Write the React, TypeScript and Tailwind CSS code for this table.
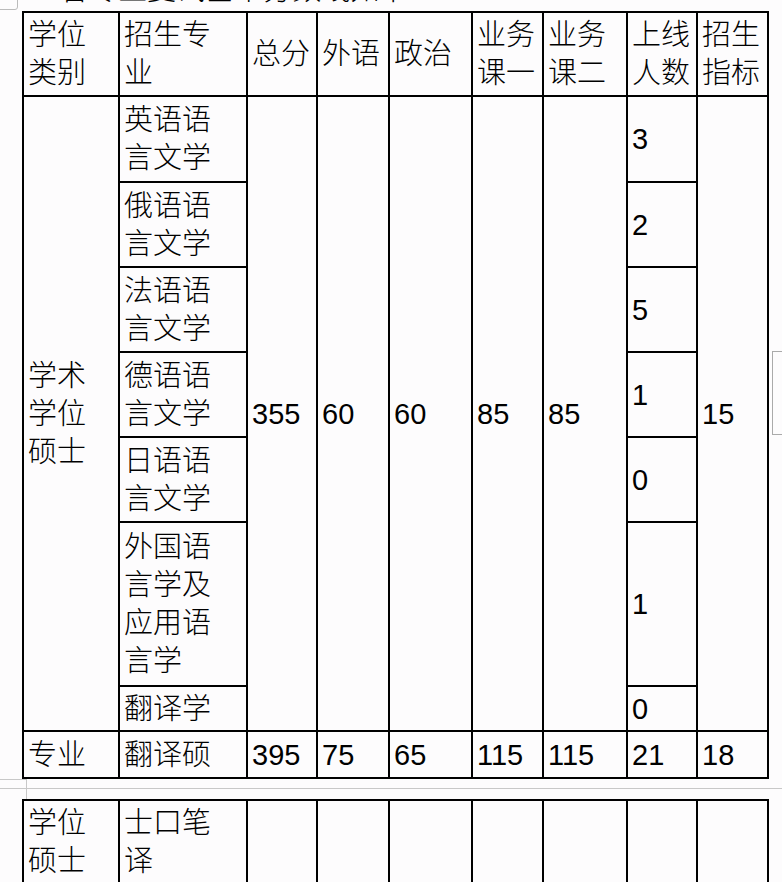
const font = { fontFamily: '"Liberation Sans", "Noto Sans CJK SC", sans-serif' };

const cell = 'border-2 border-black pl-[4px] pr-0 py-0 align-middle text-left';
const zh = `${cell} font-light`;
const num = `${cell} font-normal`;

const majors = [
  { name: ['英语语', '言文学'], count: '3', h: 'h-[86px]' },
  { name: ['俄语语', '言文学'], count: '2', h: 'h-[85px]' },
  { name: ['法语语', '言文学'], count: '5', h: 'h-[85px]' },
  { name: ['德语语', '言文学'], count: '1', h: 'h-[85px]' },
  { name: ['日语语', '言文学'], count: '0', h: 'h-[85px]' },
  { name: ['外国语', '言学及', '应用语', '言学'], count: '1', h: 'h-[164px]' },
  { name: ['翻译学'], count: '0', h: 'h-[45px]' },
];

const Lines = ({ lines }: { lines: string[] }) => (
  <>
    {lines.map((l, i) => (
      <span key={i} className="block">
        {l}
      </span>
    ))}
  </>
);

const Cols = () => (
  <colgroup>
    <col className="w-[96px]" />
    <col className="w-[128px]" />
    <col className="w-[70px]" />
    <col className="w-[72px]" />
    <col className="w-[83px]" />
    <col className="w-[71px]" />
    <col className="w-[84px]" />
    <col className="w-[70px]" />
    <col className="w-[71px]" />
  </colgroup>
);

export default function App() {
  const head = [['学位', '类别'], ['招生专', '业'], ['总分'], ['外语'], ['政治'], ['业务', '课一'], ['业务', '课二'], ['上线', '人数'], ['招生', '指标']];

  return (
    <div className="relative h-[882px] w-[782px] overflow-hidden bg-[#fdfcfd] text-[29px] leading-[38px] text-black" style={font}>
      {/* page chrome bits */}
      <div className="absolute left-[-4px] top-[-10px] h-[20px] w-[22px] rounded-[3px] border border-[#bbb]" />
      <div className="absolute right-0 top-[351px] h-[84px] w-[10px] border-y border-l border-[#aaa]" />

      <div className="-mt-[26px] h-[32px] whitespace-nowrap pl-[28px] leading-[32px] font-light">3. 各专业复试基本分数线如下</div>

      <table className="ml-[22px] mt-[5px] w-[747px] table-fixed border-collapse">
        <Cols />
        <tbody>
          <tr className="h-[84px]">
            {head.map((h, i) => (
              <th key={i} className={zh}>
                <Lines lines={h} />
              </th>
            ))}
          </tr>
          {majors.map((m, i) => (
            <tr key={i} className={m.h}>
              {i === 0 && (
                <td rowSpan={7} className={zh}>
                  <Lines lines={['学术', '学位', '硕士']} />
                </td>
              )}
              <td className={zh}>
                <Lines lines={m.name} />
              </td>
              {i === 0 && (
                <>
                  <td rowSpan={7} className={num}>355</td>
                  <td rowSpan={7} className={num}>60</td>
                  <td rowSpan={7} className={num}>60</td>
                  <td rowSpan={7} className={num}>85</td>
                  <td rowSpan={7} className={num}>85</td>
                </>
              )}
              <td className={num}>{m.count}</td>
              {i === 0 && (
                <td rowSpan={7} className={num}>15</td>
              )}
            </tr>
          ))}
          <tr className="h-[47px]">
            {['专业', '翻译硕', '395', '75', '65', '115', '115', '21', '18'].map((t, i) => (
              <td key={i} className={i < 2 ? zh : num}>{t}</td>
            ))}
          </tr>
        </tbody>
      </table>

      <div className="relative h-[20px]">
        <div className="absolute left-0 top-0 h-px w-[26px] bg-[#c8c8c8]" />
        <div className="absolute left-[26px] top-0 h-[20px] w-px bg-[#c8c8c8]" />
        <div className="absolute left-0 right-0 top-[9px] h-px bg-[#c8c8c8]" />
      </div>

      <table className="ml-[22px] w-[747px] table-fixed border-collapse">
        <Cols />
        <tbody>
          <tr className="h-[84px]">
            <td className={zh}>
              <Lines lines={['学位', '硕士']} />
            </td>
            <td className={zh}>
              <Lines lines={['士口笔', '译']} />
            </td>
            {Array.from({ length: 7 }).map((_, i) => (
              <td key={i} className={zh} />
            ))}
          </tr>
        </tbody>
      </table>
    </div>
  );
}
